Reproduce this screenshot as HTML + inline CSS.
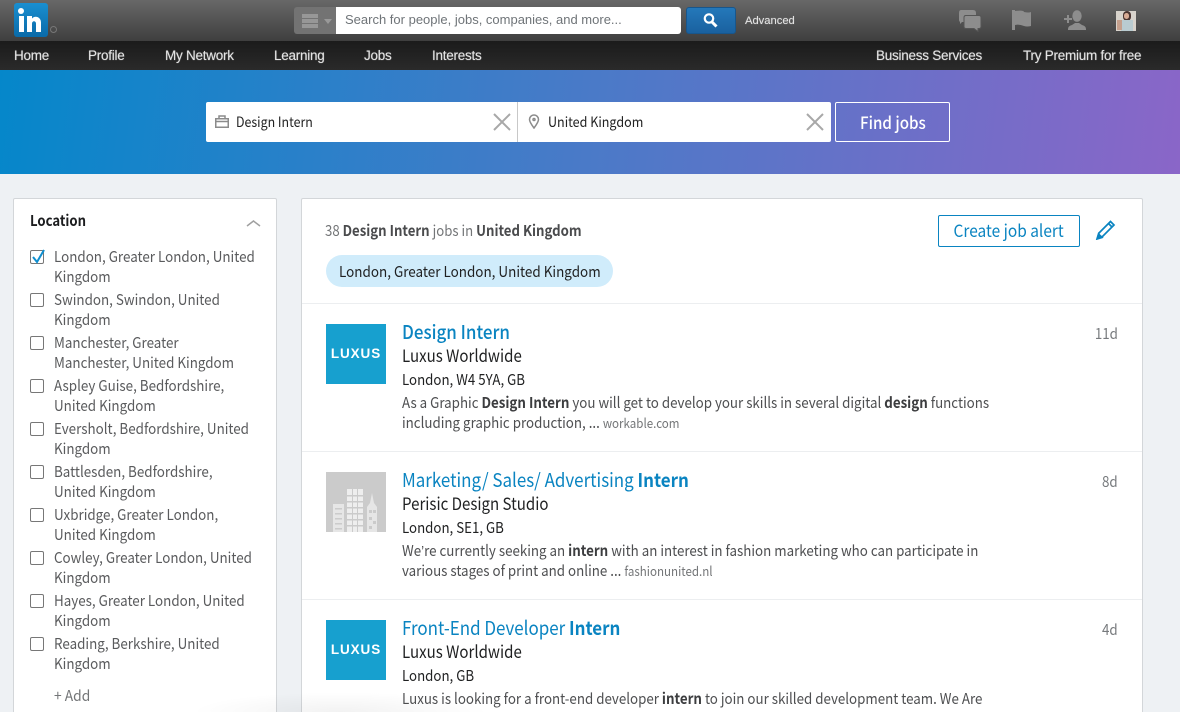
<!DOCTYPE html>
<html><head><meta charset="utf-8"><style>
*{box-sizing:border-box}
html,body{margin:0;padding:0;width:1180px;height:712px;overflow:hidden;background:#eef1f4}
body{position:relative;font-family:"Noto Sans CJK SC","Liberation Sans",sans-serif}
.a{position:absolute}
.t{position:absolute;white-space:nowrap;line-height:20px;height:20px}
.x{transform-origin:0 0;transform:scaleX(.893)}
.n{position:absolute;white-space:nowrap;font:13.5px/20px "Liberation Sans",sans-serif;color:#e4e4e4;top:46px;letter-spacing:-.25px;text-shadow:0 0 1px #999}
.f{font-size:15px;color:#5a5b5d;left:54px;transform-origin:0 0;transform:scaleX(.893)}
.cb{position:absolute;left:30px;width:14px;height:14px;border:1px solid #777;border-radius:2px;background:#fff}
.h{font-size:19px;color:#0a84c1;left:402px;font-weight:500;transform-origin:0 0;transform:scaleX(.892)}
.h b{font-weight:700}
.co{font-size:17px;color:#1f2021;left:402px;transform-origin:0 0;transform:scaleX(.885)}
.l{font-size:15px;color:#1f2021;left:402px;transform-origin:0 0;transform:scaleX(.885)}
.d{font-size:15px;color:#4e4f51;left:402px;transform-origin:0 0;transform:scaleX(.889)}
.d b{font-weight:700;color:#3c3d3f}
.s{font-size:13px;color:#737577}
.age{font-size:15px;color:#777a7d;right:62px;transform-origin:100% 0;transform:scaleX(.89)}
.lux{position:absolute;left:326px;width:60px;height:60px;background:#17a0cf;color:#fff;font:700 13.5px/60px "Liberation Sans",sans-serif;text-align:center;letter-spacing:.9px}
.sep{position:absolute;left:302px;width:840px;height:1px;background:#eceef0}
.ap{font-family:"Liberation Sans",sans-serif}
</style></head><body>
<div class="a" style="left:0;top:0;width:1180px;height:41px;background:linear-gradient(#686868,#3f3f3f)"></div>
<div class="a" style="left:0;top:41px;width:1180px;height:29px;background:linear-gradient(#1b1b1b,#2a2a2a)"></div>
<div class="a" style="left:14px;top:3px;width:34px;height:34px;border-radius:3px;background:linear-gradient(#1a8fd0,#0a6aa8)"></div>
<div class="a" style="left:18px;top:8px;width:6px;height:6px;border-radius:50%;background:#fff"></div>
<div class="a" style="left:19px;top:16px;width:5px;height:16px;background:#fff"></div>
<svg class="a" style="left:26px;top:15px" width="18" height="17"><path d="M1 1v16h5V8.500c0-3 4-3 4 0V17h5V7.500C15 2 9 0 6 3.500V1z" fill="#fff"/></svg>
<div class="a" style="left:50px;top:26px;width:7px;height:7px;border:1px solid #777;border-radius:50%"></div>
<div class="a" style="left:294px;top:7px;width:44px;height:27px;background:#737373;border-radius:3px 0 0 3px"></div>
<div class="a" style="left:302px;top:14px;width:16px;height:3.500px;background:#979797"></div>
<div class="a" style="left:302px;top:19px;width:16px;height:3.500px;background:#979797"></div>
<div class="a" style="left:302px;top:24px;width:16px;height:4px;background:#979797"></div>
<div class="a" style="left:324px;top:19px;width:0;height:0;border:4px solid transparent;border-top:5px solid #999;border-bottom:0"></div>
<div class="a" style="left:336px;top:7px;width:345px;height:27px;background:#fff;border-radius:0 3px 3px 0"></div>
<div class="t" style="left:345px;top:10px;font:13px/20px 'Liberation Sans',sans-serif;color:#6f7478">Search for people, jobs, companies, and more...</div>
<div class="a" style="left:686px;top:7px;width:50px;height:27px;border-radius:3px;background:linear-gradient(#2478ba,#1a619f);border:1px solid #18568c"></div>
<svg class="a" style="left:702px;top:12px" width="17" height="17" fill="none" stroke="#fff"><circle cx="7" cy="6.500" r="4.200" stroke-width="2.200"/><path d="M10 10l4.500 4.500" stroke-width="3"/></svg>
<div class="t" style="left:745px;top:11px;font:11.2px/20px 'Liberation Sans',sans-serif;color:#e4e4e4;text-shadow:0 0 1px #999">Advanced</div>
<svg class="a" style="left:958px;top:9px" width="24" height="23" fill="#8d8d8d"><path d="M3 1h12q3 0 3 3v2H8q-2 0-2 2v5H4l-2 2v-2q-1-1-1-2V4q0-3 2-3z"/><path d="M8 6.500h13q2 0 2 2v9q0 2-2 2h-1v3l-4-3H8q-2 0-2-2v-9q0-2 2-2z" stroke="#555" stroke-width="1"/></svg>
<svg class="a" style="left:1010px;top:9px" width="24" height="22"><path d="M2 1h3v20H2z" fill="#8d8d8d"/><path d="M5 2q9-1 9 1 5 1 7 0v14q-4 1-7 0-5-2-9-1z" fill="#8d8d8d"/></svg>
<svg class="a" style="left:1062px;top:9px" width="24" height="22" fill="#8d8d8d"><path d="M2 9h3V6h2v3h3v2H7v3H5v-3H2z"/><ellipse cx="15" cy="7" rx="4.700" ry="5.800"/><path d="M6 20q0-3 4-4l3-2h4l3 2q4 1 4 4v1H6z"/></svg>
<div class="a" style="left:1116px;top:11px;width:20px;height:20px;background:#d8d3cc;overflow:hidden">
<div class="a" style="left:7px;top:0;width:8px;height:10px;background:#4a3430;border-radius:4px"></div>
<div class="a" style="left:8px;top:2px;width:5px;height:6px;background:#d9ab94;border-radius:3px"></div>
<div class="a" style="left:5px;top:9px;width:12px;height:11px;background:#b9cbd0"></div>
<div class="a" style="left:1px;top:9px;width:5px;height:10px;background:#c49f8c"></div></div>
<div class="n" style="left:14px">Home</div>
<div class="n" style="left:88px">Profile</div>
<div class="n" style="left:165px">My Network</div>
<div class="n" style="left:274px">Learning</div>
<div class="n" style="left:364px">Jobs</div>
<div class="n" style="left:432px">Interests</div>
<div class="n" style="left:876px">Business Services</div>
<div class="n" style="left:1023px">Try Premium for free</div>

<div class="a" style="left:0;top:70px;width:1180px;height:104px;background:linear-gradient(97deg,#0587ca 0%,#4a7ac8 50%,#8a66c8 100%)"></div>
<div class="a" style="left:206px;top:102px;width:625px;height:40px;background:#fff;border-radius:2px"></div>
<div class="a" style="left:517px;top:102px;width:1px;height:40px;background:#c8c8c8"></div>
<svg class="a" style="left:214px;top:114px" width="16" height="14" fill="none" stroke="#8b8b8b" stroke-width="1.500"><rect x="1.750" y="4.750" width="12.500" height="8.500"/><path d="M5 4.500V2h6v2.500M2 7.500h12"/></svg>
<div class="t" style="left:236px;top:112px;font-size:14px;color:#222;transform-origin:0 0;transform:scaleX(.885)">Design Intern</div>
<svg class="a" style="left:493px;top:113px" width="18" height="18" stroke="#a8a8a8" stroke-width="2"><path d="M1 1l16 16M17 1L1 17"/></svg>
<svg class="a" style="left:528px;top:114px" width="12" height="15" fill="none" stroke="#8b8b8b" stroke-width="1.500"><path d="M6 14C3 10 1.500 7.500 1.500 5.500a4.500 4.500 0 0 1 9 0C10.500 7.500 9 10 6 14z"/><circle cx="6" cy="5.500" r="1"/></svg>
<div class="t" style="left:548px;top:112px;font-size:14px;color:#222;transform-origin:0 0;transform:scaleX(.896)">United Kingdom</div>
<svg class="a" style="left:806px;top:113px" width="18" height="18" stroke="#a8a8a8" stroke-width="2"><path d="M1 1l16 16M17 1L1 17"/></svg>
<div class="a" style="left:835px;top:102px;width:115px;height:40px;border:1px solid #fff;border-radius:2px;color:#fff;font-size:17px;font-weight:500;line-height:38px;text-align:center"><span style="display:inline-block;transform:scaleX(.89)">Find jobs</span></div>

<div class="a" style="left:13px;top:198px;width:264px;height:530px;background:#fff;border:1px solid #d3d6d9;border-radius:2px"></div>
<div class="t x" style="left:30px;top:211px;font-size:15px;font-weight:700;color:#1c1d1f;transform:scaleX(.875)">Location</div>
<svg class="a" style="left:246px;top:219px" width="15" height="8" fill="none" stroke="#a0a0a0" stroke-width="1.500"><path d="M1 7l6.500-5L14 7"/></svg>
<div class="cb" style="top:250px"></div>
<svg class="a" style="left:30px;top:249px" width="16" height="16" fill="none" stroke="#0f8fd0" stroke-width="2"><path d="M3 8l4 5 7-12"/></svg>
<div class="t f" style="top:247px">London, Greater London, United</div><div class="t f" style="top:267px">Kingdom</div>
<div class="cb" style="top:293px"></div>
<div class="t f" style="top:290px">Swindon, Swindon, United</div><div class="t f" style="top:310px">Kingdom</div>
<div class="cb" style="top:336px"></div>
<div class="t f" style="top:333px">Manchester, Greater</div><div class="t f" style="top:353px">Manchester, United Kingdom</div>
<div class="cb" style="top:379px"></div>
<div class="t f" style="top:376px">Aspley Guise, Bedfordshire,</div><div class="t f" style="top:396px">United Kingdom</div>
<div class="cb" style="top:422px"></div>
<div class="t f" style="top:419px">Eversholt, Bedfordshire, United</div><div class="t f" style="top:439px">Kingdom</div>
<div class="cb" style="top:465px"></div>
<div class="t f" style="top:462px">Battlesden, Bedfordshire,</div><div class="t f" style="top:482px">United Kingdom</div>
<div class="cb" style="top:508px"></div>
<div class="t f" style="top:505px">Uxbridge, Greater London,</div><div class="t f" style="top:525px">United Kingdom</div>
<div class="cb" style="top:551px"></div>
<div class="t f" style="top:548px">Cowley, Greater London, United</div><div class="t f" style="top:568px">Kingdom</div>
<div class="cb" style="top:594px"></div>
<div class="t f" style="top:591px">Hayes, Greater London, United</div><div class="t f" style="top:611px">Kingdom</div>
<div class="cb" style="top:637px"></div>
<div class="t f" style="top:634px">Reading, Berkshire, United</div><div class="t f" style="top:654px">Kingdom</div>
<div class="t f" style="top:686px;color:#737577;transform:scaleX(.92)">+ Add</div>

<div class="a" style="left:301px;top:198px;width:842px;height:530px;background:#fff;border:1px solid #d3d6d9;border-radius:2px"></div>
<div class="t x" style="left:325px;top:221px;font-size:15px;color:#737577;transform:scaleX(.88)">38 <b style="color:#4a4b4d">Design Intern</b> jobs in <b style="color:#4a4b4d">United Kingdom</b></div>
<div class="a" style="left:326px;top:255px;width:287px;height:32px;border-radius:16px;background:#d0ecfb"></div>
<div class="t x" style="left:339px;top:262px;font-size:15px;color:#1f2021;transform:scaleX(.897)">London, Greater London, United Kingdom</div>
<div class="a" style="left:938px;top:215px;width:142px;height:32px;border:1px solid #0a84c1;border-radius:2px;color:#0a84c1;font-size:17px;line-height:30px;text-align:center"><span style="display:inline-block;position:relative;top:-1px;transform:scaleX(.909)">Create job alert</span></div>
<svg class="a" style="left:1095px;top:220px" width="22" height="20" fill="none" stroke="#0a84c1" stroke-width="1.700"><path d="M2.500 18l1.500-5L15.500 1.500l3.500 3.500L7.500 16.500zM13.500 3.500l3.500 3.500"/><path d="M2 19l1.500-5 3.500 3.500z" fill="#0a84c1"/></svg>
<div class="sep" style="top:303px"></div>

<div class="lux" style="top:324px">LUXUS</div>
<div class="t h" style="top:322px">Design Intern</div>
<div class="t co" style="top:345px">Luxus Worldwide</div>
<div class="t l" style="top:370px">London, W4 5YA, GB</div>
<div class="t d" style="top:393px">As a Graphic <b>Design Intern</b> you will get to develop your skills in several digital <b>design</b> functions</div>
<div class="t d" style="top:413px">including graphic production, ... <span class="s">workable.com</span></div>
<div class="t age" style="top:324px">11d</div>
<div class="sep" style="top:451px"></div>

<div class="a" style="left:326px;top:472px;width:60px;height:60px;background:#cbcbcb"></div>
<svg class="a" style="left:326px;top:472px" width="60" height="60" fill="#e6e6e6"><path d="M7 32h11v28H7z"/><path d="M21 17h16v43H21z" fill="#eeeeee"/><path d="M41 60V35l3-4 1-5 1-5 1 5 1 5 3 4v25z"/><g fill="#cbcbcb"><rect x="9" y="36" width="7" height="1.500"/><rect x="9" y="41" width="7" height="1.500"/><rect x="9" y="46" width="7" height="1.500"/><rect x="9" y="51" width="7" height="1.500"/><rect x="9" y="56" width="7" height="1.500"/><rect x="26" y="17" width="1" height="43"/><rect x="31" y="17" width="1" height="43"/><rect x="21" y="23" width="16" height="1.500"/><rect x="21" y="29" width="16" height="1.500"/><rect x="21" y="35" width="16" height="1.500"/><rect x="21" y="41" width="16" height="1.500"/><rect x="21" y="47" width="16" height="1.500"/><rect x="21" y="53" width="16" height="1.500"/><rect x="43" y="38" width="3" height="3"/><rect x="47" y="38" width="3" height="3"/><rect x="43" y="45" width="3" height="3"/><rect x="47" y="49" width="3" height="3"/><rect x="43" y="54" width="3" height="3"/></g></svg>
<div class="t h" style="top:470px;font-weight:400">Marketing/ Sales/ Advertising <b>Intern</b></div>
<div class="t co" style="top:493px">Perisic Design Studio</div>
<div class="t l" style="top:518px">London, SE1, GB</div>
<div class="t d" style="top:541px">We<span class="ap">’</span>re currently seeking an <b>intern</b> with an interest in fashion marketing who can participate in</div>
<div class="t d" style="top:561px">various stages of print and online ... <span class="s">fashionunited.nl</span></div>
<div class="t age" style="top:472px">8d</div>
<div class="sep" style="top:599px"></div>

<div class="lux" style="top:620px">LUXUS</div>
<div class="t h" style="top:618px;font-weight:400">Front-End Developer <b>Intern</b></div>
<div class="t co" style="top:641px">Luxus Worldwide</div>
<div class="t l" style="top:666px">London, GB</div>
<div class="t d" style="top:689px">Luxus is looking for a front-end developer <b>intern</b> to join our skilled development team. We Are</div>
<div class="t age" style="top:620px">4d</div>
<div class="a" style="left:190px;top:692px;width:300px;height:20px;background:radial-gradient(ellipse at 50% 100%,rgba(0,0,0,.05),rgba(0,0,0,0) 70%)"></div>
</body></html>
